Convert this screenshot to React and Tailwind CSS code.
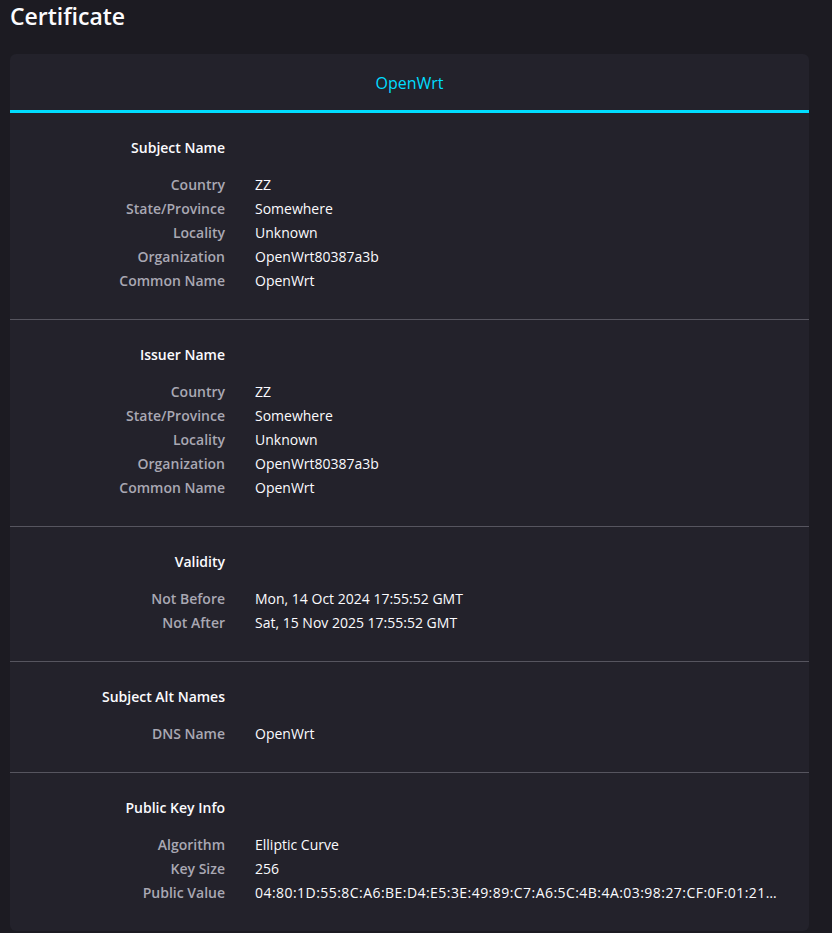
const sections = [
  {
    title: 'Subject Name',
    rows: [
      ['Country', 'ZZ'],
      ['State/Province', 'Somewhere'],
      ['Locality', 'Unknown'],
      ['Organization', 'OpenWrt80387a3b'],
      ['Common Name', 'OpenWrt'],
    ],
  },
  {
    title: 'Issuer Name',
    rows: [
      ['Country', 'ZZ'],
      ['State/Province', 'Somewhere'],
      ['Locality', 'Unknown'],
      ['Organization', 'OpenWrt80387a3b'],
      ['Common Name', 'OpenWrt'],
    ],
  },
  {
    title: 'Validity',
    rows: [
      ['Not Before', 'Mon, 14 Oct 2024 17:55:52 GMT'],
      ['Not After', 'Sat, 15 Nov 2025 17:55:52 GMT'],
    ],
  },
  {
    title: 'Subject Alt Names',
    rows: [['DNS Name', 'OpenWrt']],
  },
  {
    title: 'Public Key Info',
    rows: [
      ['Algorithm', 'Elliptic Curve'],
      ['Key Size', '256'],
      ['Public Value', '04:80:1D:55:8C:A6:BE:D4:E5:3E:49:89:C7:A6:5C:4B:4A:03:98:27:CF:0F:01:21…', true],
    ],
  },
];

const Section = ({ title, rows, last }) => (
  <div className={`pt-[23px] pb-[26px] pr-[29px] ${last ? '' : 'border-b border-[#56555f]'}`}>
    <div className="grid grid-cols-[215px_1fr] gap-x-[30px]">
      <div className="text-right font-semibold text-[#fbfbfe] leading-6">{title}</div>
      <div />
    </div>
    <div className="grid grid-cols-[215px_1fr] gap-x-[30px] mt-[13px]">
      {rows.map(([label, value, wide]) => (
        <div key={label} className="contents">
          <div className="text-right font-semibold text-[#a9a8b3] leading-6">{label}</div>
          <div className={`text-[#fbfbfe] leading-6 whitespace-nowrap ${wide ? 'tracking-[0.45px]' : ''}`}>
            {value}
          </div>
        </div>
      ))}
    </div>
  </div>
);

const App = () => {
  return (
    <div
      className="min-h-screen bg-[#1c1b22] pl-[10px] pr-[23px] pb-10 text-sm"
      style={{ fontFamily: '"Open Sans", "Noto Sans", sans-serif' }}
    >
      <h1 className="text-[23px] font-semibold text-[#fbfbfe] leading-8">Certificate</h1>
      <div className="mt-[22px] bg-[#23222b] rounded-md overflow-hidden">
        <div className="h-[59px] pt-[2px] flex items-center justify-center text-base text-[#00ddff] border-b-[3px] border-[#00ddff]">
          OpenWrt
        </div>
        {sections.map((s, i) => (
          <Section key={s.title} {...s} last={i === sections.length - 1} />
        ))}
      </div>
    </div>
  );
};

export default App;
